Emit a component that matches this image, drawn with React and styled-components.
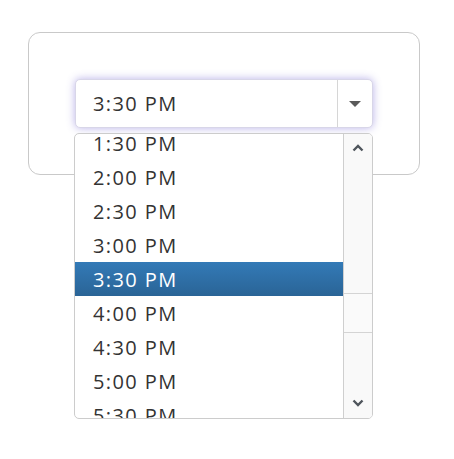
import React, { useLayoutEffect, useRef } from 'react'
import styled, { createGlobalStyle } from 'styled-components'

const GlobalStyle = createGlobalStyle`
    body {
        margin: 0;
        background: #ffffff;
        font-family: "Open Sans", "Noto Sans", sans-serif;
    }
`

const Page = styled.div`
    min-height: 459px;
    box-sizing: border-box;
    padding: 32px 35px 0 28px;
`

const Card = styled.div`
    width: 392px;
    height: 143px;
    box-sizing: border-box;
    border: 1px solid #c9c9c9;
    border-radius: 12px;
    display: flex;
    align-items: center;
    justify-content: center;
`

const Picker = styled.div`
    position: relative;
    width: 298px;
`

const SelectBox = styled.div`
    height: 49px;
    box-sizing: border-box;
    display: flex;
    border: 1px solid #d8d6e8;
    border-radius: 5px;
    background: #ffffff;
    box-shadow: 0 0 8px rgba(100, 85, 205, 0.45);
`

const SelectValue = styled.div`
    flex: 1;
    display: flex;
    align-items: center;
    padding-left: 17px;
    font-size: 20px;
    letter-spacing: 1.4px;
    color: #333333;
`

const ArrowButton = styled.div`
    width: 34px;
    border-left: 1px solid #d6d6d6;
    display: flex;
    align-items: center;
    justify-content: center;
`

const Triangle = styled.div`
    width: 0;
    height: 0;
    border-left: 6px solid transparent;
    border-right: 6px solid transparent;
    border-top: 6px solid #5a5a5a;
    margin-top: 1px;
`

const Dropdown = styled.div`
    position: absolute;
    top: 54px;
    left: -1px;
    width: 299px;
    height: 286px;
    box-sizing: border-box;
    border: 1px solid #cccccc;
    border-radius: 5px;
    background: #ffffff;
    display: flex;
    overflow: hidden;
`

const List = styled.ul`
    flex: 1;
    margin: 0;
    padding: 0;
    list-style: none;
    overflow: hidden;
`

const Option = styled.li`
    height: 34px;
    display: flex;
    align-items: center;
    padding-left: 18px;
    font-size: 20px;
    letter-spacing: 1.4px;
    color: ${props => props.selected ? '#ffffff' : '#333333'};
    background: ${props => props.selected
        ? 'linear-gradient(#337ab7, #2a6496)'
        : 'transparent'};
`

const Scrollbar = styled.div`
    width: 28px;
    border-left: 1px solid #cfcfcf;
    background: #f9f9f9;
    display: flex;
    flex-direction: column;
`

const ScrollButton = styled.div`
    height: 24px;
    display: flex;
    align-items: center;
    justify-content: center;
    padding-top: ${props => props.up ? '2px' : '0'};
    padding-bottom: ${props => props.up ? '0' : '3px'};
`

const Track = styled.div`
    flex: 1;
    display: flex;
    flex-direction: column;
`

const Thumb = styled.div`
    height: 38px;
    border-top: 1px solid #d4d4d4;
    border-bottom: 1px solid #d4d4d4;
    background: #fafafa;
`

const Chevron = ({ up }) => (
    <svg width="12" height="8" viewBox="0 0 12 8">
        <path
            d={up ? 'M1.5 6.5 L6 2 L10.5 6.5' : 'M1.5 1.5 L6 6 L10.5 1.5'}
            fill="none"
            stroke="#4f555c"
            strokeWidth="2.4"
        />
    </svg>
)

const times = []
for (let h = 0; h < 24; h++) {
    for (let m of ['00', '30']) {
        const hour = h % 12 === 0 ? 12 : h % 12
        times.push(`${hour}:${m} ${h < 12 ? 'AM' : 'PM'}`)
    }
}

const selected = '3:30 PM'

export default function App() {
    const listRef = useRef(null)

    useLayoutEffect(() => {
        // 1:30 PM sits a little above the top edge
        const first = times.indexOf('1:30 PM')
        if (listRef.current) listRef.current.scrollTop = first * 34 + 8
    }, [])

    return <>
        <GlobalStyle/>
        <Page>
            <Card>
                <Picker>
                    <SelectBox>
                        <SelectValue>{selected}</SelectValue>
                        <ArrowButton><Triangle/></ArrowButton>
                    </SelectBox>
                    <Dropdown>
                        <List ref={listRef}>
                            {times.map(t =>
                                <Option key={t} selected={t === selected}>{t}</Option>
                            )}
                        </List>
                        <Scrollbar>
                            <ScrollButton up><Chevron up/></ScrollButton>
                            <Track>
                                <div style={{ height: 133 }}/>
                                <Thumb/>
                            </Track>
                            <ScrollButton><Chevron/></ScrollButton>
                        </Scrollbar>
                    </Dropdown>
                </Picker>
            </Card>
        </Page>
    </>
}
